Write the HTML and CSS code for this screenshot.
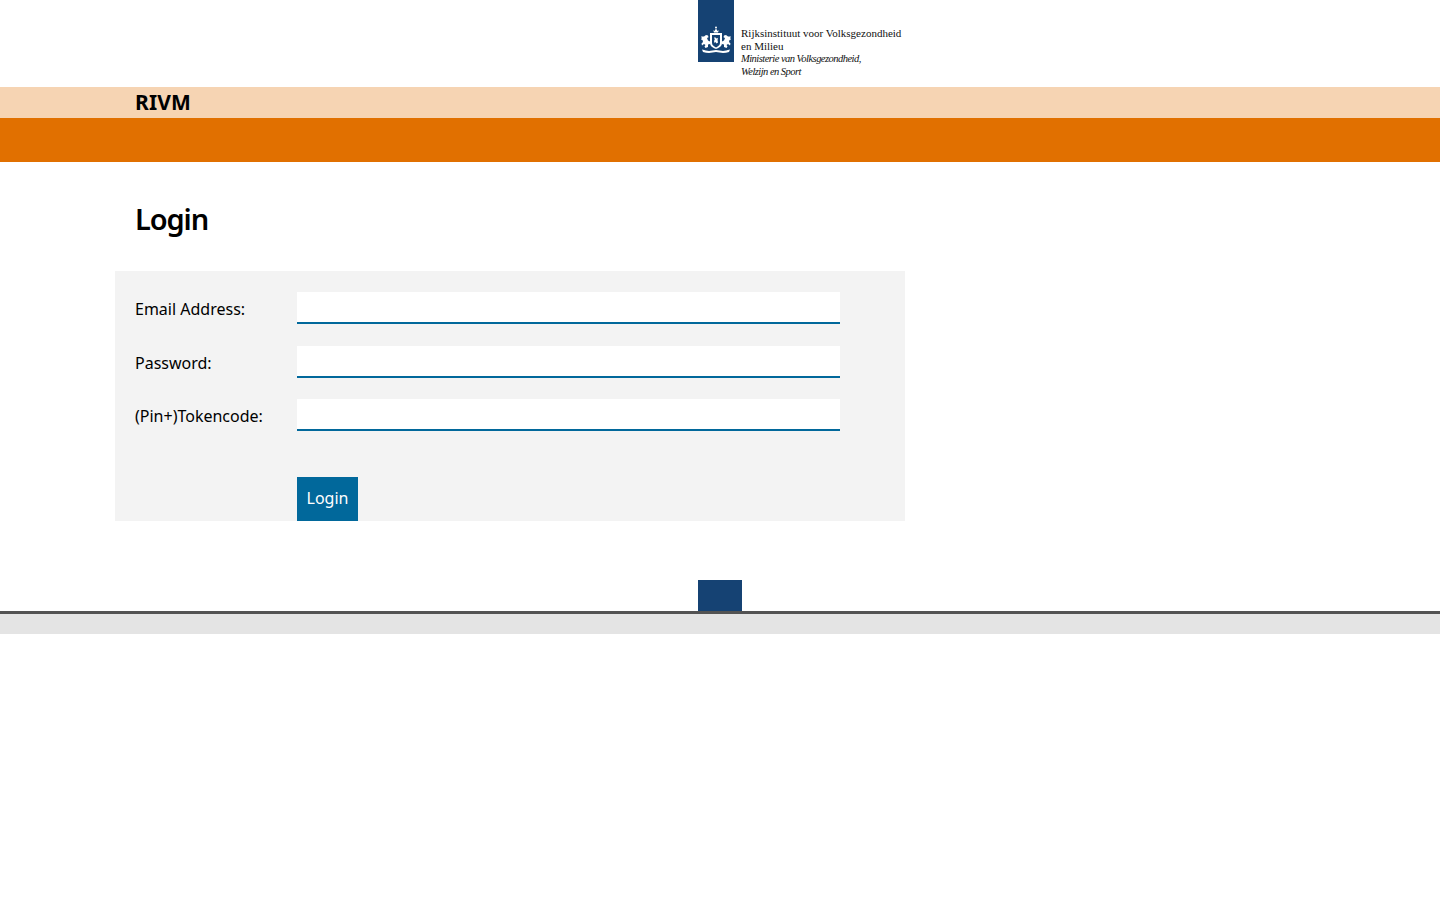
FILE: index.html
```html
<!DOCTYPE html>
<html lang="en">
<head>
<meta charset="utf-8">
<title>Login - RIVM</title>
<link rel="stylesheet" href="styles.css">
</head>
<body>
<header class="masthead">
  <div class="logo">
    <div class="logo-bar">
      <svg class="crest" viewBox="0 0 32 28" width="32" height="28" aria-hidden="true">
        <g fill="#fff">
          <path d="M14 6.500h4l.8-2.200-1.300.7L16 2.600l-1.500 2.400-1.300-.7z"/>
          <circle cx="16" cy="1.600" r="1"/>
          <path d="M1 10.500h3l2-1.500 2 .5.500 1.800-1.500.7 1 2.500 2 1v2.500l-2 .5v2.500l-2.500 1-1-1.500 1-1.500-1.500-1-2 1.500-.5-2 1.500-1.500-.5-2-1.500-.5.800-1.500z"/>
          <path d="M31 10.500h-3l-2-1.500-2 .5-.5 1.800 1.500.7-1 2.500-2 1v2.500l2 .5v2.500l2.500 1 1-1.500-1-1.500 1.500-1 2 1.500.5-2-1.500-1.500.5-2 1.500-.5-.8-1.500z"/>
          <path d="M10 7h12v10c0 3.500-3.500 5-6 6-2.500-1-6-2.500-6-6z"/>
          <path d="M2 23.500c3 .5 5 1.500 7 1.500l7-1 7 1c2 0 4-1 7-1.500l-1 2.500c-2 .5-4 1-6 1l-7-1-7 1c-2 0-4-.5-6-1z"/>
        </g>
        <path d="M12 9h8v8c0 2.500-2.500 3.700-4 4.400-1.500-.7-4-1.900-4-4.400z" fill="#154273"/>
        <path d="M14 11.500h1.500l1 1 1.500-.5-.5 2 .5 2.500-1.500 1-1-1.500-1 1-.5-2 .8-1.500z" fill="#fff"/>
      </svg>
    </div>
    <div class="logo-text">
      <div class="logo-org">Rijksinstituut voor Volksgezondheid<br>en Milieu</div>
      <div class="logo-min">Ministerie van Volksgezondheid,<br>Welzijn en Sport</div>
    </div>
  </div>
</header>
<div class="brand-strip"><span class="brand">RIVM</span></div>
<div class="nav-bar"></div>
<main class="content">
  <h1 class="title">Login</h1>
  <form class="panel">
    <div class="field">
      <label class="label" for="email">Email Address:</label>
      <input class="input" id="email" type="text">
    </div>
    <div class="field">
      <label class="label" for="password">Password:</label>
      <input class="input" id="password" type="password">
    </div>
    <div class="field">
      <label class="label" for="token">(Pin+)Tokencode:</label>
      <input class="input" id="token" type="text">
    </div>
    <div class="actions">
      <button class="button" type="button">Login</button>
    </div>
  </form>
</main>
<footer class="footer">
  <div class="footer-tab"></div>
  <div class="footer-band"></div>
</footer>
</body>
</html>
```

FILE: styles.css
```css
* {
  box-sizing: border-box;
}

html,
body {
  margin: 0;
  padding: 0;
  background: #fff;
}

body {
  font-family: "Noto Sans", "Open Sans", sans-serif;
  color: #000;
}

.masthead {
  height: 87px;
  padding-left: 698px;
}

.logo {
  display: flex;
  align-items: flex-start;
  gap: 7px;
}

.logo-bar {
  width: 36px;
  height: 62px;
  background: #154273;
  display: flex;
  justify-content: center;
  padding-top: 26px;
}

.crest {
  display: block;
}

.logo-text {
  padding-top: 27px;
  font-family: "Liberation Serif", serif;
  color: #111;
  white-space: nowrap;
}

.logo-org {
  font-size: 11px;
  line-height: 12.500px;
  margin-bottom: 1px;
}

.logo-min {
  font-size: 10.500px;
  line-height: 12.500px;
  font-style: italic;
  letter-spacing: -0.53px;
}

.brand-strip {
  height: 31px;
  background: #f6d4b3;
  padding-left: 135px;
}

.brand {
  font-size: 21px;
  line-height: 31px;
  font-weight: 700;
  letter-spacing: 0.1px;
}

.nav-bar {
  height: 44px;
  background: #e17000;
}

.content {
  height: 418px;
  padding: 37px 0 0 115px;
}

.title {
  margin: 0 0 32px 20px;
  font-size: 29px;
  line-height: 40px;
  font-weight: 600;
  letter-spacing: -1.1px;
}

.panel {
  width: 790px;
  height: 250px;
  background: #f3f3f3;
  padding: 21px 0 0 20px;
}

.field {
  display: flex;
  align-items: flex-start;
  height: 53.500px;
}

.label {
  width: 162px;
  font-size: 16px;
  line-height: 34.400px;
}

.input {
  display: block;
  width: 543px;
  height: 32px;
  border: 0;
  border-bottom: 2px solid #01689b;
  border-radius: 0;
  background: #fff;
  padding: 0 8px;
  font: inherit;
  outline: 0;
}

.actions {
  padding: 24.500px 0 0 162px;
}

.button {
  display: block;
  width: 61px;
  height: 44px;
  border: 0;
  border-radius: 0;
  padding: 0 0 2px;
  background: #01689b;
  color: #fff;
  font-family: inherit;
  font-size: 16px;
}

.footer-tab {
  width: 44px;
  height: 31px;
  margin-left: 698px;
  background: #154273;
}

.footer-band {
  height: 23px;
  background: #e4e4e4;
  border-top: 3px solid #535353;
}
```
